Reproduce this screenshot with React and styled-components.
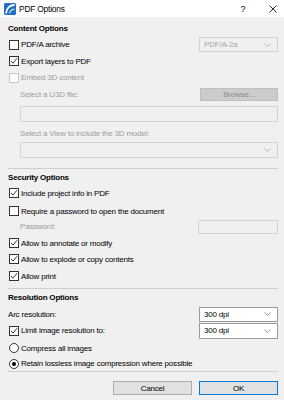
import React from 'react'
import styled, { createGlobalStyle } from 'styled-components'

const GlobalStyle = createGlobalStyle`
  html, body {
    margin: 0;
    padding: 0;
    background: #f0f0f0;
  }
  body {
    font-family: 'Liberation Sans', Arial, sans-serif;
    font-size: 8px;
    letter-spacing: -0.2px;
    color: #000;
  }
`

const Window = styled.div`
  width: 284px;
  height: 400px;
  background: #f0f0f0;
  display: flex;
  flex-direction: column;
  overflow: hidden;
`

const TitleBar = styled.div`
  height: 17px;
  background: #fff;
  display: flex;
  align-items: center;
  padding: 0 6px 0 4px;
  font-size: 8.4px;
`

const TitleText = styled.span`
  margin-left: 3px;
  flex: 1;
`

const TitleButton = styled.span`
  width: 10px;
  display: flex;
  justify-content: center;
  margin-left: ${(p) => p.gap || 0}px;
  font-size: 9px;
`

const Body = styled.div`
  display: flex;
  flex-direction: column;
  padding: 0 6px 0 8px;
`

const Heading = styled.div`
  height: 16px;
  display: flex;
  align-items: center;
  font-weight: bold;
  margin-top: ${(p) => p.mt || 0}px;
`

const Row = styled.div`
  height: ${(p) => p.h || 16}px;
  margin-top: ${(p) => p.mt || 0}px;
  display: flex;
  align-items: center;
  justify-content: space-between;
  color: ${(p) => (p.disabled ? '#9d9d9d' : '#000')};
  padding-left: ${(p) => (p.indent ? 12 : 0)}px;
`

const Check = styled.label`
  display: flex;
  align-items: center;
  gap: 2px;
  padding-left: 1px;
`

const Box = styled.span`
  width: 8px;
  height: 8px;
  border: 1px solid ${(p) => (p.disabled ? '#c5c5c5' : '#333')};
  background: #fff;
  display: flex;
  align-items: center;
  justify-content: center;
`

const Radio = styled.span`
  width: 8px;
  height: 8px;
  border: 1px solid #333;
  border-radius: 50%;
  background: #fff;
  display: flex;
  align-items: center;
  justify-content: center;
  &::after {
    content: '';
    display: ${(p) => (p.on ? 'block' : 'none')};
    width: 4px;
    height: 4px;
    border-radius: 50%;
    background: #000;
  }
`

const Select = styled.div`
  box-sizing: border-box;
  width: ${(p) => (p.full ? '100%' : '79px')};
  height: ${(p) => p.h || 15}px;
  margin-top: ${(p) => p.mt || 0}px;
  border: 1px solid ${(p) => (p.disabled ? '#d4d4d4' : '#9a9a9a')};
  background: ${(p) => (p.disabled ? '#f0f0f0' : '#fff')};
  color: ${(p) => (p.disabled ? '#a6a6a6' : '#000')};
  display: flex;
  align-items: center;
  justify-content: space-between;
  padding: 0 6px 0 4px;
`

const Field = styled.div`
  box-sizing: border-box;
  width: ${(p) => (p.full ? 'auto' : '80px')};
  height: ${(p) => p.h || 16}px;
  margin-top: ${(p) => p.mt || 0}px;
  margin-left: ${(p) => (p.full ? 12 : 0)}px;
  border: 1px solid #d4d4d4;
  background: #f0f0f0;
`

const Browse = styled.div`
  box-sizing: border-box;
  width: 78px;
  height: 13px;
  background: #cccccc;
  border: 1px solid #bfbfbf;
  color: #8d8d8d;
  display: flex;
  align-items: center;
  justify-content: center;
`

const Separator = styled.div`
  height: 1px;
  background: #cfcfcf;
  margin-top: ${(p) => p.mt || 0}px;
`

const Indented = styled.div`
  padding-left: 12px;
  display: flex;
  flex-direction: column;
`

const Footer = styled.div`
  margin-top: 9px;
  display: flex;
  justify-content: flex-end;
  gap: 7px;
`

const Button = styled.div`
  box-sizing: border-box;
  width: 79px;
  height: 14px;
  background: #e1e1e1;
  border: 1px solid ${(p) => (p.primary ? '#0078d7' : '#adadad')};
  display: flex;
  align-items: center;
  justify-content: center;
`

const Chevron = ({ color = '#777' }) => (
  <svg width='7' height='4' viewBox='0 0 7 4'>
    <polyline points='0.5,0.5 3.5,3.5 6.5,0.5' fill='none' stroke={color} strokeWidth='0.8' />
  </svg>
)

const Tick = () => (
  <svg width='8' height='8' viewBox='0 0 8 8'>
    <polyline points='1,4 3,6.2 7,1.2' fill='none' stroke='#222' strokeWidth='0.9' />
  </svg>
)

const Logo = () => (
  <svg width='12' height='12' viewBox='0 0 12 12'>
    <rect x='0' y='0' width='12' height='12' rx='1.5' fill='#1f6fc5' />
    <path d='M2 10.5 C2.5 5 6 2 10.5 2' fill='none' stroke='#fff' strokeWidth='1.8' />
    <path d='M5.5 10.5 C6 8 8 6.5 10.5 6.2' fill='none' stroke='#cfe3f7' strokeWidth='1.2' />
  </svg>
)

const Close = () => (
  <svg width='8' height='8' viewBox='0 0 8 8'>
    <path d='M0.5 0.5 L7.5 7.5 M7.5 0.5 L0.5 7.5' stroke='#111' strokeWidth='0.9' />
  </svg>
)

const CheckItem = ({ checked, disabled, children }) => (
  <Check>
    <Box disabled={disabled}>{checked && <Tick />}</Box>
    <span>{children}</span>
  </Check>
)

const RadioItem = ({ on, children }) => (
  <Check>
    <Radio on={on} />
    <span>{children}</span>
  </Check>
)

const App = () => {
  return (
    <>
      <GlobalStyle />
      <Window>
        <TitleBar>
          <Logo />
          <TitleText>PDF Options</TitleText>
          <TitleButton>?</TitleButton>
          <TitleButton gap={20}>
            <Close />
          </TitleButton>
        </TitleBar>
        <Body>
          <Heading mt={3}>Content Options</Heading>
          <Row h={17}>
            <CheckItem>PDF/A archive</CheckItem>
            <Select disabled>
              <span>PDF/A-2a</span>
              <Chevron color='#aaa' />
            </Select>
          </Row>
          <Row>
            <CheckItem checked>Export layers to PDF</CheckItem>
          </Row>
          <Row h={17} disabled>
            <CheckItem disabled>Embed 3D content</CheckItem>
          </Row>
          <Row disabled indent>
            <span>Select a U3D file:</span>
            <Browse>Browse...</Browse>
          </Row>
          <Field full mt={4} />
          <Row disabled indent mt={3}>
            <span>Select a View to include the 3D model:</span>
          </Row>
          <Indented>
            <Select full disabled h={16} mt={1}>
              <span />
              <Chevron color='#aaa' />
            </Select>
          </Indented>
          <Separator mt={10} />
          <Heading>Security Options</Heading>
          <Row>
            <CheckItem checked>Include project info in PDF</CheckItem>
          </Row>
          <Row mt={2}>
            <CheckItem>Require a password to open the document</CheckItem>
          </Row>
          <Row h={15} disabled indent>
            <span>Password:</span>
            <Field h={14} />
          </Row>
          <Row mt={1}>
            <CheckItem checked>Allow to annotate or modify</CheckItem>
          </Row>
          <Row>
            <CheckItem checked>Allow to explode or copy contents</CheckItem>
          </Row>
          <Row mt={1}>
            <CheckItem checked>Allow print</CheckItem>
          </Row>
          <Separator mt={4} />
          <Heading>Resolution Options</Heading>
          <Row mt={1}>
            <span>Arc resolution:</span>
            <Select>
              <span>300 dpi</span>
              <Chevron />
            </Select>
          </Row>
          <Row h={17}>
            <CheckItem checked>Limit image resolution to:</CheckItem>
            <Select h={16}>
              <span>300 dpi</span>
              <Chevron />
            </Select>
          </Row>
          <Row mt={1}>
            <RadioItem>Compress all images</RadioItem>
          </Row>
          <Row h={15}>
            <RadioItem on>Retain lossless image compression where possible</RadioItem>
          </Row>
          <Separator />
          <Footer>
            <Button>Cancel</Button>
            <Button primary>OK</Button>
          </Footer>
        </Body>
      </Window>
    </>
  )
}

export default App
